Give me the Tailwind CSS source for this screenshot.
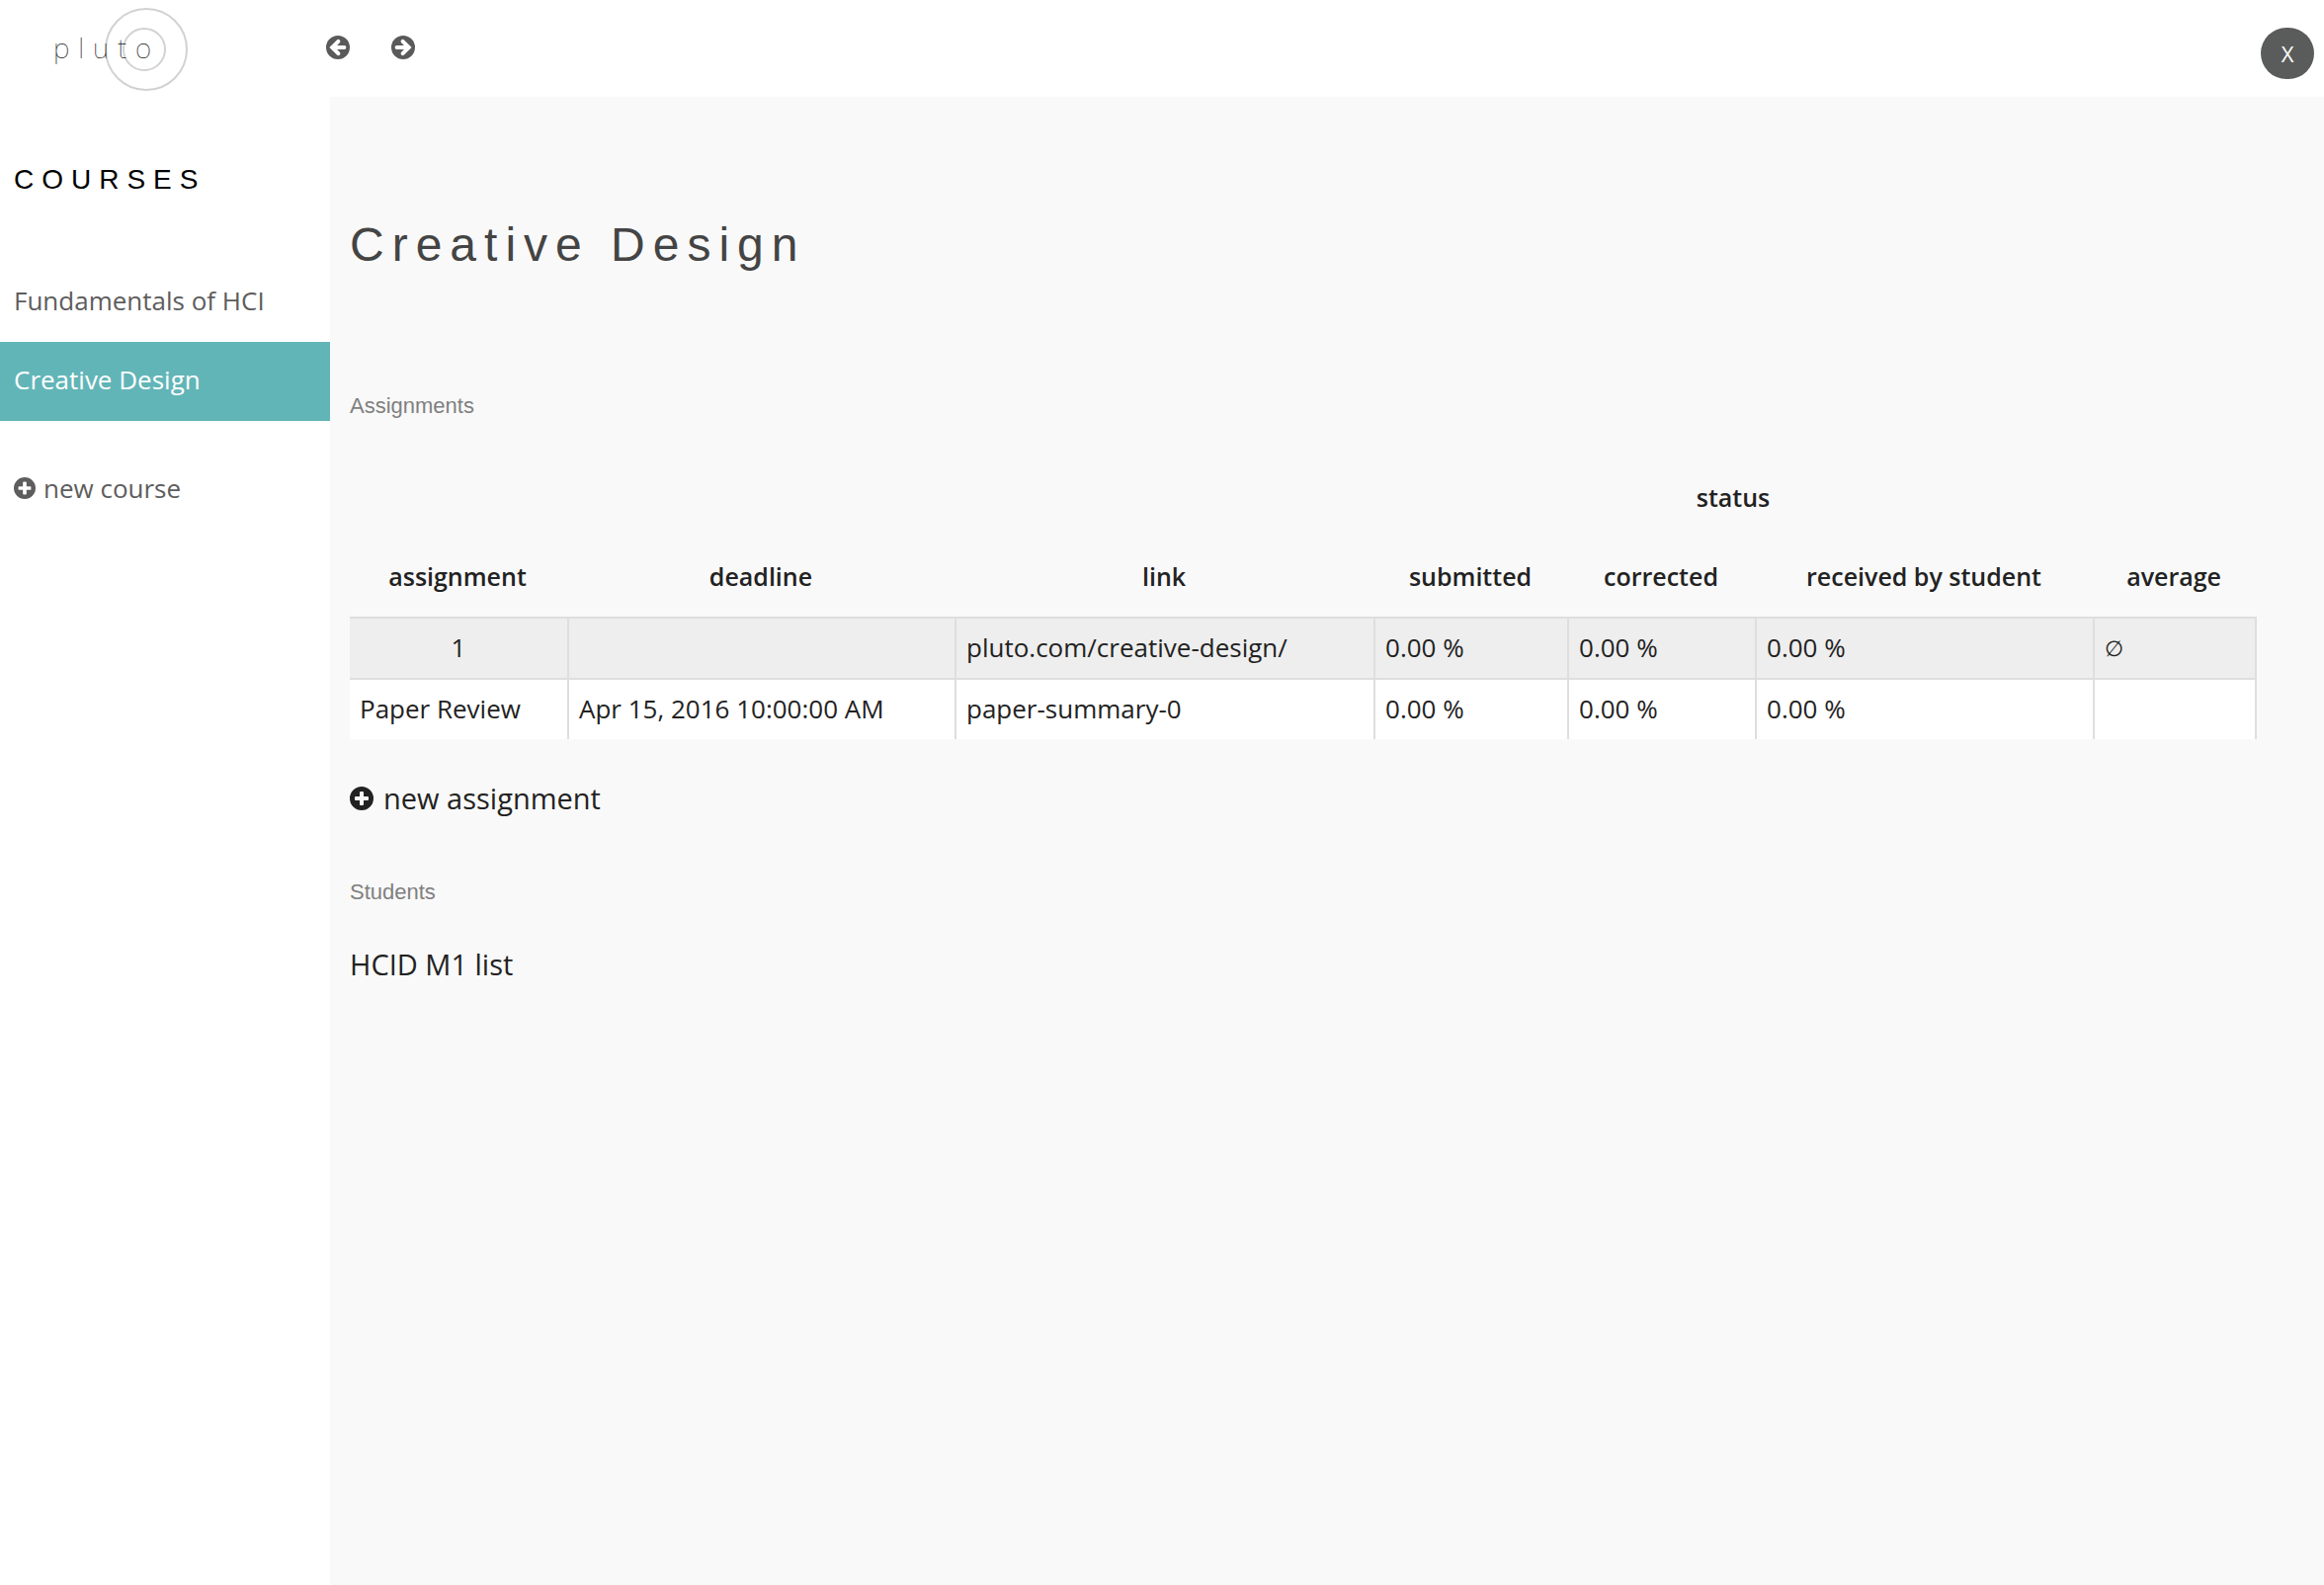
<!DOCTYPE html>
<html lang="en">
<head>
  <meta charset="UTF-8" />
  <meta name="viewport" content="width=device-width, initial-scale=1.0"/>
  <title>pluto</title>
  <script src="https://cdn.jsdelivr.net/npm/@tailwindcss/browser@4"></script>
</head>
<body class="min-h-screen flex flex-col bg-white text-[#222] font-['Open_Sans','Noto_Sans',sans-serif] text-[26px] leading-10">

  <!-- icons -->
  <svg class="hidden">
    <symbol id="arrow-left" viewBox="0 0 24 24">
      <circle cx="12" cy="12" r="12" fill="currentColor"/>
      <path d="M12.4 5.8 6.2 12l6.2 6.2M7 12h11.4" fill="none" stroke="#fff" stroke-width="4" stroke-linecap="round"/>
    </symbol>
    <symbol id="arrow-right" viewBox="0 0 24 24">
      <circle cx="12" cy="12" r="12" fill="currentColor"/>
      <path d="M11.6 5.8l6.2 6.2-6.2 6.2M17 12H5.6" fill="none" stroke="#fff" stroke-width="4" stroke-linecap="round"/>
    </symbol>
    <symbol id="plus" viewBox="0 0 24 24">
      <path fill-rule="evenodd" fill="currentColor" d="M12 0a12 12 0 1 0 0 24a12 12 0 1 0 0-24zM11 5h2q1 0 1 1v4h4q1 0 1 1v2q0 1-1 1h-4v4q0 1-1 1h-2q-1 0-1-1v-4H6q-1 0-1-1v-2q0-1 1-1h4V6q0-1 1-1z"/>
    </symbol>
  </svg>

  <header class="flex h-[98px] pr-2.5">
    <div class="w-[330px] shrink-0">
      <a href="/" class="relative block h-full pl-[54px] pt-7">
        <svg class="absolute left-[106px] top-2 size-[84px]" viewBox="0 0 84 84" fill="none" stroke="#d2d2d2" stroke-width="2">
          <circle cx="42" cy="42" r="41"/>
          <circle cx="40" cy="42" r="21"/>
        </svg>
        <span class="relative font-['Noto_Sans',sans-serif] font-thin text-[28px] tracking-[9px] text-[#222]">pluto</span>
      </a>
    </div>
    <nav class="flex gap-[42px] pt-9 text-[#5a5a5a]">
      <button type="button" aria-label="Back" class="size-6"><svg class="size-6"><use href="#arrow-left"/></svg></button>
      <button type="button" aria-label="Forward" class="size-6"><svg class="size-6"><use href="#arrow-right"/></svg></button>
    </nav>
    <button type="button" class="ml-auto mt-7 w-[54px] h-[52px] rounded-[26px] bg-[#5a5c5b] text-white text-[22px]">X</button>
  </header>

  <div class="flex grow">
    <!-- sidebar -->
    <aside class="w-[334px] shrink-0 text-[#5d5d5d]">
      <h2 class="pl-3.5 pt-16 pb-16 font-['Liberation_Sans',Arial,sans-serif] text-[28px] tracking-[8px] text-black">COURSES</h2>
      <nav>
        <a href="#" class="block px-3.5 pt-4.5 pb-5.5">Fundamentals of HCI</a>
        <a href="#" class="block px-3.5 pt-4.5 pb-5.5 bg-[#62b5b7] text-white">Creative Design</a>
      </nav>
      <button type="button" class="flex items-center gap-2 mt-12 px-3.5">
        <svg class="size-[22px]"><use href="#plus"/></svg>
        new course
      </button>
    </aside>

    <main class="grow bg-[#f9f9f9] pl-5 pr-[68px]">
      <h1 class="pt-[120px] font-['Liberation_Sans',Arial,sans-serif] text-[48px] leading-[60px] tracking-[8px] text-[#444]">Creative Design</h1>

      <h3 class="mt-[113px] font-['Liberation_Sans',Arial,sans-serif] text-[22px] text-[#808080]">Assignments</h3>

      <table class="mt-[33px] w-full table-fixed border-separate border-spacing-0">
        <colgroup>
          <col class="w-[222px]"><col class="w-[392px]"><col class="w-[424px]"><col class="w-[196px]">
          <col class="w-[190px]"><col class="w-[342px]"><col class="w-[164px]">
        </colgroup>
        <thead class="text-[25px] [&_th]:font-semibold [&_th]:h-20 [&_th]:p-0 [&_th]:pr-1 [&_th]:pb-0.5">
          <tr>
            <th colspan="3"></th>
            <th colspan="3">status</th>
            <th></th>
          </tr>
          <tr>
            <th>assignment</th>
            <th>deadline</th>
            <th>link</th>
            <th>submitted</th>
            <th>corrected</th>
            <th>received by student</th>
            <th>average</th>
          </tr>
        </thead>
        <tbody class="[&_td]:h-[62px] [&_td]:px-2.5 [&_td]:pb-0.5 [&_td]:border-r-2 [&_td]:border-t-2 [&_td]:border-[#dedede]">
          <tr class="bg-[#eee]">
            <td class="text-center">1</td>
            <td></td>
            <td>pluto.com/creative-design/</td>
            <td>0.00 %</td>
            <td>0.00 %</td>
            <td>0.00 %</td>
            <td class="text-[22px]">∅</td>
          </tr>
          <tr class="bg-white">
            <td>Paper Review</td>
            <td>Apr 15, 2016 10:00:00 AM</td>
            <td>paper-summary-0</td>
            <td>0.00 %</td>
            <td>0.00 %</td>
            <td>0.00 %</td>
            <td></td>
          </tr>
        </tbody>
      </table>

      <button type="button" class="flex items-center gap-2.5 mt-10 text-[29px]">
        <svg class="size-6"><use href="#plus"/></svg>
        new assignment
      </button>

      <h3 class="mt-[55px] font-['Liberation_Sans',Arial,sans-serif] text-[22px] text-[#808080]">Students</h3>
      <a href="#" class="block mt-[33px] text-[29px]">HCID M1 list</a>
    </main>
  </div>
</body>
</html>
